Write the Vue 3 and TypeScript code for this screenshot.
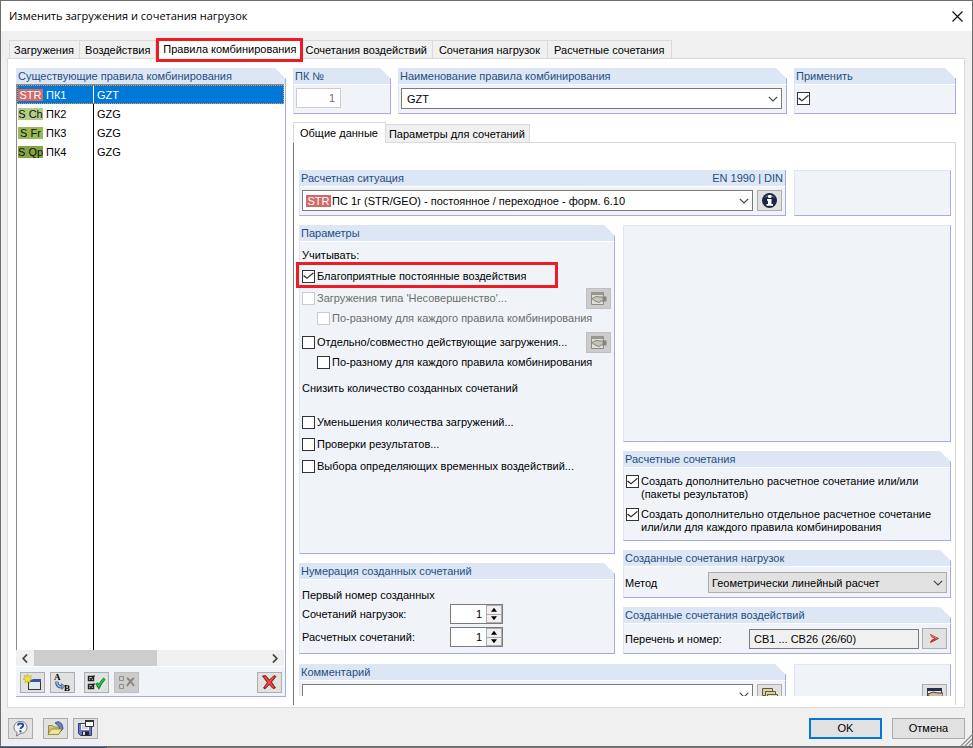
<script setup lang="ts">
import { ref } from 'vue'

interface Rule {
  code: string
  tone: string
  name: string
  description: string
}

const mainTabs = [
  'Загружения',
  'Воздействия',
  'Правила комбинирования',
  'Сочетания воздействий',
  'Сочетания нагрузок',
  'Расчетные сочетания',
]
const activeTab = ref(2)

const subTabs = ['Общие данные', 'Параметры для сочетаний']
const activeSubTab = ref(0)

const rules: Rule[] = [
  { code: 'STR', tone: 'str', name: 'ПК1', description: 'GZT' },
  { code: 'S Ch', tone: 'ch', name: 'ПК2', description: 'GZG' },
  { code: 'S Fr', tone: 'fr', name: 'ПК3', description: 'GZG' },
  { code: 'S Qp', tone: 'qp', name: 'ПК4', description: 'GZG' },
]
const selectedRule = ref(0)

const apply = ref(true)
const favourable = ref(true)
const separateLoads = ref(false)
const separatePerRule = ref(false)
const reduceCases = ref(false)
const checkResults = ref(false)
const selectLeading = ref(false)
const createEnvelope = ref(true)
const createPerRule = ref(true)
const firstLoad = ref(1)
const firstResult = ref(1)
</script>

<template>
  <div class="desktop">
    <div class="window">
      <header class="titlebar">
        <h1>Изменить загружения и сочетания нагрузок</h1>
        <button class="close" type="button" aria-label="Закрыть">
          <svg width="11" height="11" viewBox="0 0 11 11"><path d="M.5 .5L10.5 10.5M10.5 .5L.5 10.5" stroke="#111" stroke-width="1.2" /></svg>
        </button>
      </header>

      <nav class="tabs" role="tablist">
        <button
          v-for="(tab, i) in mainTabs"
          :key="tab"
          class="tab"
          :class="{ active: i === activeTab }"
          type="button"
          role="tab"
          :aria-selected="i === activeTab"
          @click="activeTab = i"
        >{{ tab }}</button>
      </nav>

      <main class="panel">
        <section class="group rules">
          <h2 class="head">Существующие правила комбинирования</h2>
          <div class="rules-body">
            <div class="list">
              <table>
                <tbody>
                  <tr
                    v-for="(rule, i) in rules"
                    :key="rule.name"
                    :class="{ selected: i === selectedRule }"
                    @click="selectedRule = i"
                  >
                    <td class="rule-name"><span class="badge" :class="rule.tone">{{ rule.code }}</span>{{ rule.name }}</td>
                    <td class="rule-text">{{ rule.description }}</td>
                  </tr>
                </tbody>
              </table>
            </div>
            <div class="scrollbar">
              <button type="button" aria-label="Влево"><svg width="6" height="9" viewBox="0 0 6 9"><path d="M5 .5L1.2 4.500L5 8.500" fill="none" stroke="#444" stroke-width="1.8" /></svg></button>
              <div class="track"><div class="thumb"></div></div>
              <button type="button" aria-label="Вправо"><svg width="6" height="9" viewBox="0 0 6 9"><path d="M1 .5L4.800 4.500L1 8.500" fill="none" stroke="#444" stroke-width="1.8" /></svg></button>
            </div>
            <div class="toolbar">
              <button class="tool" type="button" aria-label="Создать">
                <svg width="19" height="17" viewBox="0 0 19 17">
                  <rect x="5.500" y="5.500" width="12" height="10" fill="#e3e7f0" stroke="#333" />
                  <rect x="6" y="5" width="12" height="3" fill="#2f55a8" />
                  <path d="M4.500 0l1.200 2.700L8.500 1.500 7.300 4.200 9.500 5.500 7 6.300 7 9 4.800 7.300 2.200 9 2.500 6 0 5 2.300 3.800 1.300 1.300 3.800 2.500z" fill="#f2e23a" stroke="#b3a422" stroke-width=".6" />
                </svg>
              </button>
              <button class="tool" type="button" aria-label="Перенумеровать">
                <svg width="19" height="19" viewBox="0 0 19 19">
                  <text x="1" y="7" class="glyph">A</text>
                  <text x="11" y="18" class="glyph">B</text>
                  <path d="M4 8.500c-.5 4 2 6 6 5" fill="none" stroke="#3f5f90" stroke-width="3.400" />
                  <path d="M4 8.500c-.5 4 2 6 6 5" fill="none" stroke="#9bb8e0" stroke-width="1.600" />
                  <path d="M8 10.500l4 2.500-3 3.500z" fill="#7f9fcf" stroke="#3f5f90" stroke-width=".6" />
                </svg>
              </button>
              <button class="tool spaced" type="button" aria-label="Выбрать все">
                <svg width="19" height="17" viewBox="0 0 19 17">
                  <path d="M1.500 2.500h5v4h-5zM1.500 10.500h5v4h-5z" fill="#fff" stroke="#222" stroke-width="1.400" />
                  <path d="M2.500 4l1.500 1.500L7.500 1.500M2.500 12l1.500 1.500L7.500 9.500" fill="none" stroke="#222" stroke-width="1.300" />
                  <path d="M9.500 9l2.300 3.800C13.500 9.500 15 7 17.500 4.500" fill="none" stroke="#0a7a1c" stroke-width="3" />
                  <path d="M9.800 9.300l2 3C13.500 9.500 15 7 17.500 4.500" fill="none" stroke="#25c840" stroke-width="1.500" />
                </svg>
              </button>
              <button class="tool off" type="button" aria-label="Снять выбор" disabled>
                <svg width="19" height="17" viewBox="0 0 19 17">
                  <path d="M2.500 2.500h4v4h-4zM2.500 10.500h4v4h-4z" fill="#ccc" stroke="#909088" />
                  <path d="M10 4c3 2 5 5 7 8M17 4c-3 2-5 5-7 8" fill="none" stroke="#85857c" stroke-width="1.800" />
                </svg>
              </button>
              <button class="tool last" type="button" aria-label="Удалить">
                <svg width="17" height="17" viewBox="0 0 17 17">
                  <path d="M1.500 2L4.500 1.500 8.500 6 13 1.500 15 2.500 10.500 8 14.500 14 12 14.500 8.300 10.500 4 15 2.500 14 6.300 8.500z" fill="#dc2f2f" stroke="#6d1515" stroke-width=".8" />
                  <path d="M4 3l8 10M12.500 3L4.500 13" stroke="#f26a6a" stroke-width=".7" />
                </svg>
              </button>
            </div>
          </div>
        </section>

        <div class="details">
          <div class="top-row">
            <section class="group">
              <label class="head" for="rule-no">ПК №</label>
              <div class="body field-body"><input id="rule-no" class="rule-no" type="text" value="1" disabled></div>
            </section>
            <section class="group">
              <label class="head" for="rule-title">Наименование правила комбинирования</label>
              <div class="body field-body">
                <div class="combo">
                  <select id="rule-title"><option>GZT</option></select>
                  <svg class="chevron" width="10" height="6" viewBox="0 0 10 6"><path d="M.8 .8L5 5 9.200 .8" fill="none" stroke="#444" stroke-width="1.200" /></svg>
                </div>
              </div>
            </section>
            <section class="group">
              <label class="head" for="apply">Применить</label>
              <div class="body apply-body"><input id="apply" v-model="apply" type="checkbox"></div>
            </section>
          </div>

          <nav class="subtabs" role="tablist">
            <button
              v-for="(tab, i) in subTabs"
              :key="tab"
              class="subtab"
              :class="{ active: i === activeSubTab }"
              type="button"
              role="tab"
              :aria-selected="i === activeSubTab"
              @click="activeSubTab = i"
            >{{ tab }}</button>
          </nav>

          <div class="subpanel">
            <div class="sheet">
              <div class="wide-row">
                <section class="group">
                  <div class="head square"><label for="situation">Расчетная ситуация</label><span>EN 1990 | DIN</span></div>
                  <div class="body situation-body">
                    <div class="combo">
                      <span class="badge str inline">STR</span>
                      <select id="situation" class="with-badge"><option>ПС 1г (STR/GEO) - постоянное / переходное - форм. 6.10</option></select>
                      <svg class="chevron" width="10" height="6" viewBox="0 0 10 6"><path d="M.8 .8L5 5 9.200 .8" fill="none" stroke="#444" stroke-width="1.200" /></svg>
                    </div>
                    <button class="tool" type="button" aria-label="Информация">
                      <svg width="17" height="17" viewBox="0 0 17 17">
                        <circle cx="8.500" cy="8.500" r="7.500" fill="#1b2647" />
                        <path d="M3 6a6 5 0 0 1 11 0c-3-2-8-2-11 0z" fill="#60709c" />
                        <rect x="7" y="3" width="3.500" height="3" rx="1" fill="#fff" />
                        <path d="M6 7h4.500v5H12v1.800H5.500V12H7V8.700H6z" fill="#fff" />
                      </svg>
                    </button>
                  </div>
                </section>
                <div class="group blank"></div>
              </div>

              <div class="columns">
                <div class="column">
                  <section class="group params">
                    <h2 class="head">Параметры</h2>
                    <div class="body params-body">
                      <p class="line">Учитывать:</p>
                      <label class="line marked"><input v-model="favourable" type="checkbox">Благоприятные постоянные воздействия</label>
                      <div class="line gap-s">
                        <label class="muted"><input type="checkbox" disabled>Загружения типа 'Несовершенство'...</label>
                        <button class="tool off" type="button" aria-label="Настройки несовершенств" disabled>
                          <svg width="17" height="15" viewBox="0 0 17 15">
                            <path d="M1.500 1.500h12v12h-12z" fill="#deded6" stroke="#8c8c84" />
                            <path d="M1 1h13v3H1z" fill="#96968e" />
                            <path d="M2 7.500l4-2 4 .5h3v4h-2l-2 1.500-4-1.500z" fill="#c4c4ba" stroke="#85857c" />
                            <path d="M13 5.500h3.500v5H13z" fill="#85857c" />
                          </svg>
                        </button>
                      </div>
                      <label class="line nested muted"><input type="checkbox" disabled>По-разному для каждого правила комбинирования</label>
                      <div class="line gap-m">
                        <label><input v-model="separateLoads" type="checkbox">Отдельно/совместно действующие загружения...</label>
                        <button class="tool off" type="button" aria-label="Настройки загружений" disabled>
                          <svg width="17" height="15" viewBox="0 0 17 15">
                            <path d="M1.500 1.500h12v12h-12z" fill="#deded6" stroke="#8c8c84" />
                            <path d="M1 1h13v3H1z" fill="#96968e" />
                            <path d="M2 7.500l4-2 4 .5h3v4h-2l-2 1.500-4-1.500z" fill="#c4c4ba" stroke="#85857c" />
                            <path d="M13 5.500h3.500v5H13z" fill="#85857c" />
                          </svg>
                        </button>
                      </div>
                      <label class="line nested"><input v-model="separatePerRule" type="checkbox">По-разному для каждого правила комбинирования</label>
                      <p class="line gap-l">Снизить количество созданных сочетаний</p>
                      <label class="line gap-xl"><input v-model="reduceCases" type="checkbox">Уменьшения количества загружений...</label>
                      <label class="line gap-s"><input v-model="checkResults" type="checkbox">Проверки результатов...</label>
                      <label class="line gap-s"><input v-model="selectLeading" type="checkbox">Выбора определяющих временных воздействий...</label>
                    </div>
                  </section>

                  <section class="group numbering">
                    <h2 class="head">Нумерация созданных сочетаний</h2>
                    <div class="body numbering-body">
                      <p>Первый номер созданных</p>
                      <div class="number-row">
                        <label for="first-load">Сочетаний нагрузок:</label>
                        <div class="spinner">
                          <input id="first-load" v-model.number="firstLoad" type="text">
                          <div class="arrows">
                            <button type="button" aria-label="Больше" @click="firstLoad++"><i class="up"></i></button>
                            <button type="button" aria-label="Меньше" @click="firstLoad--"><i class="down"></i></button>
                          </div>
                        </div>
                      </div>
                      <div class="number-row">
                        <label for="first-result">Расчетных сочетаний:</label>
                        <div class="spinner">
                          <input id="first-result" v-model.number="firstResult" type="text">
                          <div class="arrows">
                            <button type="button" aria-label="Больше" @click="firstResult++"><i class="up"></i></button>
                            <button type="button" aria-label="Меньше" @click="firstResult--"><i class="down"></i></button>
                          </div>
                        </div>
                      </div>
                    </div>
                  </section>
                </div>

                <div class="column">
                  <div class="group blank fill"></div>
                  <section class="group">
                    <h2 class="head">Расчетные сочетания</h2>
                    <div class="body results-body">
                      <label><input v-model="createEnvelope" type="checkbox"><span>Создать дополнительно расчетное сочетание или/или<br>(пакеты результатов)</span></label>
                      <label><input v-model="createPerRule" type="checkbox"><span>Создать дополнительно отдельное расчетное сочетание<br>или/или для каждого правила комбинирования</span></label>
                    </div>
                  </section>
                  <section class="group">
                    <h2 class="head">Созданные сочетания нагрузок</h2>
                    <div class="body pair-body method-body">
                      <label class="method-label" for="method">Метод</label>
                      <div class="combo grey">
                        <select id="method"><option>Геометрически линейный расчет</option></select>
                        <svg class="chevron" width="10" height="6" viewBox="0 0 10 6"><path d="M.8 .8L5 5 9.200 .8" fill="none" stroke="#444" stroke-width="1.200" /></svg>
                      </div>
                    </div>
                  </section>
                  <section class="group">
                    <h2 class="head">Созданные сочетания воздействий</h2>
                    <div class="body pair-body">
                      <label class="range-label" for="range">Перечень и номер:</label>
                      <input id="range" class="range" type="text" value="СВ1 ... СВ26 (26/60)" readonly>
                      <button class="tool" type="button" aria-label="Перейти">
                        <svg width="11" height="11" viewBox="0 0 11 11">
                          <path d="M1.500 1.500L9.500 5.500 1.500 9.500 2.500 7.300 6 5.500 2.500 3.700z" fill="#e03a3a" stroke="#a02525" stroke-width=".8" />
                          <path d="M2 2.500L8 5.500" stroke="#f7a0a0" stroke-width=".8" />
                        </svg>
                      </button>
                    </div>
                  </section>
                </div>
              </div>

              <div class="wide-row">
                <section class="group">
                  <label class="head" for="comment">Комментарий</label>
                  <div class="body situation-body">
                    <div class="combo">
                      <select id="comment"><option></option></select>
                      <svg class="chevron" width="10" height="6" viewBox="0 0 10 6"><path d="M.8 .8L5 5 9.200 .8" fill="none" stroke="#444" stroke-width="1.200" /></svg>
                    </div>
                    <button class="tool" type="button" aria-label="Библиотека комментариев">
                      <svg width="17" height="17" viewBox="0 0 17 17">
                        <path d="M1.500 2.500h10v7h-10z" fill="#d8d2a4" stroke="#5f5a3a" />
                        <path d="M4.500 5.500h10v7h-10z" fill="#d8d2a4" stroke="#5f5a3a" />
                        <path d="M6.500 8.500h10v7h-10z" fill="#e6e0b4" stroke="#5f5a3a" />
                      </svg>
                    </button>
                  </div>
                </section>
                <div class="group blank comment-tools">
                  <button class="tool" type="button" aria-label="Параметры">
                    <svg width="17" height="17" viewBox="0 0 17 17">
                      <path d="M1.500 2.500h14v12h-14z" fill="#e8e8e8" stroke="#444" />
                      <path d="M1 2h15v3H1z" fill="#22304e" />
                      <path d="M2 8l5-2 5 1h5v4h-4l-3 3-3-3-5-1z" fill="#d8b899" stroke="#4a3a30" />
                    </svg>
                  </button>
                </div>
              </div>
            </div>
          </div>
        </div>
      </main>

      <footer class="footer">
        <button class="tool" type="button" aria-label="Справка">
          <svg width="19" height="17" viewBox="0 0 19 17">
            <path d="M9.500 1.500c4 0 6.500 2.600 6.500 5.900s-2.500 5.800-6 5.800L5.500 16l.6-3.600C4 11.500 3 9.600 3 7.400 3 4 5.500 1.500 9.500 1.500z" fill="#f4f6fb" stroke="#777" />
            <path d="M7 5.500c0-2.600 5.200-2.600 5.200 0C12.200 7.300 9.600 7 9.500 9M9.400 10.300v2" fill="none" stroke="#27479a" stroke-width="2" />
          </svg>
        </button>
        <button class="tool open" type="button" aria-label="Открыть">
          <svg width="19" height="17" viewBox="0 0 19 17">
            <path d="M9 3c4-3 8 0 8 6l-3 3c0-5-2-7-5-9z" fill="#5d86bd" stroke="#2f4b73" stroke-width=".8" />
            <path d="M2.500 5.500h4l1.500 1.500h5v7h-10.500z" fill="#d9c76a" stroke="#8a7a30" stroke-width=".8" />
            <path d="M5 9h11l-3.500 5.500H2z" fill="#efe39a" stroke="#8a7a30" stroke-width=".8" />
          </svg>
        </button>
        <button class="tool" type="button" aria-label="Сохранить">
          <svg width="19" height="17" viewBox="0 0 19 17">
            <path d="M2.500 3.500h13v12h-11l-2-2z" fill="#6d74c8" stroke="#343a80" />
            <path d="M5 4h8v6H5z" fill="#fff" />
            <path d="M6 6h4M6 8h6" stroke="#999" stroke-width=".8" />
            <path d="M6 11.500h7v4H6z" fill="#222" />
            <path d="M7 12h2v3H7z" fill="#ddd" />
            <path d="M9.500 .500h8v6h-8z" fill="#fff" stroke="#333" />
            <path d="M9 0h9v2H9z" fill="#333" />
          </svg>
        </button>
        <button class="action primary" type="button">OK</button>
        <button class="action" type="button">Отмена</button>
        <svg class="grip" width="12" height="12" viewBox="0 0 12 12"><path d="M1 12L12 1M5 12L12 5M9 12L12 9" stroke="#8a8a8a" stroke-width="1.200" /></svg>
      </footer>
    </div>
  </div>
</template>

<style>
body {
  margin: 0;
}
</style>

<style scoped>
* {
  box-sizing: border-box;
}

.desktop {
  height: 100vh;
  padding-bottom: 1px;
  background: linear-gradient(90deg, #2c4f7c 11%, #747474 11%);
  font-family: 'Liberation Sans', Arial, sans-serif;
  font-size: 11px;
  line-height: 14px;
  color: #000;
}

.window {
  display: flex;
  flex-direction: column;
  height: 100%;
  border: 1px solid #6f6d6e;
  background: #f0f0f0;
}

button,
input,
select {
  font: inherit;
  color: inherit;
  margin: 0;
}

button {
  padding: 0;
}

h1,
h2,
p {
  margin: 0;
  font-size: inherit;
  font-weight: normal;
}

svg {
  display: block;
}

.titlebar {
  display: flex;
  align-items: center;
  justify-content: space-between;
  height: 30px;
  flex: none;
  padding: 0 9px 0 8px;
  background: #fff;
}

.titlebar h1 {
  font-family: 'Open Sans', 'Segoe UI', sans-serif;
}

.close {
  border: 0;
  background: none;
}

/* main tabs */
.tabs {
  display: flex;
  align-items: flex-end;
  flex: none;
  height: 27px;
  padding-left: 8px;
}

.tab,
.subtab {
  height: 18px;
  padding: 0 5px;
  border: 1px solid #d9d9d9;
  border-bottom: 0;
  border-left-width: 0;
  background: #f0f0f0;
  white-space: nowrap;
}

.tab:first-child {
  padding-left: 4px;
  border-left-width: 1px;
}

.tab.active {
  position: relative;
  z-index: 1;
  height: 24px;
  margin-bottom: -4px;
  padding: 0 4px 3px;
  border: 3px solid #ed1c24;
  background: #fff;
}

.tab.active ~ .tab {
  padding: 0 7px 0 6px;
}

.tab.active + .tab {
  padding: 0 5px 0 2px;
}

.panel {
  display: grid;
  grid-template-columns: minmax(0, 270fr) minmax(0, 663fr);
  gap: 7px;
  flex: 1;
  min-height: 0;
  margin: 0 7px 0 6px;
  padding: 9px 8px 2px;
  border: 1px solid #d9d9d9;
  background: #fff;
}

/* titled groups */
.group {
  display: flex;
  flex-direction: column;
  min-width: 0;
}

.head {
  display: block;
  flex: none;
  height: 16px;
  padding: 0 2px;
  overflow: hidden;
  border-right: 1px solid #a9a9ea;
  background: #dce6f4;
  clip-path: polygon(0 0, calc(100% - 11px) 0, 100% 11px, 100% 100%, 0 100%);
  color: #1f4e82;
  line-height: 16px;
  white-space: nowrap;
}

.head.square {
  display: flex;
  justify-content: space-between;
  clip-path: none;
}

.body,
.blank {
  border: 1px solid #a9a9ea;
  border-left-color: #dce6f4;
  background: #f0f4f9;
}

.body {
  flex: 1;
  border-top-color: #fff;
}

.blank {
  border-top-color: #dce6f4;
}

/* list of rules */
.rules {
  margin-bottom: 8px;
}

.rules-body {
  display: flex;
  flex-direction: column;
  flex: 1;
  min-height: 0;
  border: solid #a9a9ea;
  border-width: 0 1px 1px 0;
}

.list {
  flex: 1;
  min-height: 0;
  margin-right: 1px;
  border: solid #8c8c8c;
  border-width: 1px 0 0 1px;
  background: linear-gradient(#000, #000) 76px 0 / 1px 100% no-repeat #fff;
}

table {
  width: 100%;
  border-spacing: 0;
}

tr {
  height: 19px;
}

td {
  padding: 0;
}

.rule-name {
  width: 77px;
  padding-left: 1px;
}

.rule-text {
  padding-left: 3px;
}

.selected {
  outline: 1px dotted #e8944a;
  outline-offset: -1px;
  background: #0078d7;
  color: #fff;
}

.selected .rule-name {
  border-right: 1px solid #fff;
}

.badge {
  display: inline-block;
  width: 25px;
  height: 12px;
  margin-right: 3px;
  color: #111;
  font-size: 11px;
  line-height: 12px;
  text-align: center;
  white-space: nowrap;
}

.badge.str {
  background: #d26a6a;
  color: #fff;
}

.badge.ch {
  background: #b3cd87;
}

.badge.fr {
  background: #99b957;
}

.badge.qp {
  background: #83a543;
}

.scrollbar {
  display: flex;
  flex: none;
  height: 16px;
  margin: 0 1px 1px 0;
  background: #f0f0f0;
}

.scrollbar button {
  display: grid;
  place-items: center;
  width: 18px;
  border: 0;
  background: none;
}

.track {
  flex: 1;
}

.thumb {
  width: 53%;
  height: 100%;
  background: #cdcdcd;
}

.toolbar {
  display: flex;
  gap: 5px;
  flex: none;
  height: 29px;
  padding: 5px 3px 0 4px;
  background: #f0f4f9;
}

.tool {
  display: grid;
  place-items: center;
  flex: none;
  width: 25px;
  height: 21px;
  border: 1px solid #adadad;
  background: #e1e1e1;
}

.tool.off {
  border-color: #bfbfbf;
  background: #cccccc;
}

.tool.spaced {
  margin-left: 4px;
}

.tool.last {
  margin-left: auto;
}

.glyph {
  font-family: 'Liberation Serif', serif;
  font-size: 9px;
  font-weight: bold;
}

/* right side */
.details {
  display: flex;
  flex-direction: column;
  min-height: 0;
  min-width: 0;
}

.top-row {
  display: grid;
  grid-template-columns: minmax(0, 98fr) minmax(0, 389fr) minmax(0, 162fr);
  gap: 7px;
  margin-bottom: 8px;
}

.field-body {
  padding: 3px 4px 4px 2px;
}

.rule-no {
  display: block;
  width: 45px;
  height: 20px;
  padding: 0 5px;
  border: 1px solid #ccc;
  background: #fff;
  color: #6d6d6d;
  text-align: right;
}

.apply-body {
  padding: 7px 2px;
}

.combo {
  position: relative;
  flex: 1;
  min-width: 0;
}

select {
  display: block;
  width: 100%;
  height: 21px;
  padding: 0 22px 0 5px;
  appearance: none;
  border: 1px solid #7a7a7a;
  border-radius: 0;
  background: #fff;
}

.with-badge {
  padding-left: 29px;
}

.grey select {
  padding-left: 3px;
  border-color: #adadad;
  background: #e1e1e1;
}

.chevron {
  position: absolute;
  top: 8px;
  right: 4px;
  pointer-events: none;
}

.badge.inline {
  position: absolute;
  top: 5px;
  left: 4px;
}

input[type='checkbox'] {
  display: grid;
  place-items: center;
  flex: none;
  width: 13px;
  height: 13px;
  appearance: none;
  border: 1px solid #333;
  background: #fff;
}

input[type='checkbox']:checked::before {
  content: '';
  width: 11px;
  height: 9px;
  background: #333;
  clip-path: polygon(0 50%, 10% 40%, 36% 66%, 90% 10%, 100% 20%, 36% 84%);
}

input[type='checkbox']:disabled {
  border-color: #ccc;
}

.subtabs {
  display: flex;
  align-items: flex-end;
  flex: none;
  height: 20px;
}

.subtab {
  padding: 0 4px 0 3px;
}

.subtab.active {
  height: 21px;
  margin-bottom: -1px;
  padding: 0 7px 1px 6px;
  border-left-width: 1px;
  background: #fff;
  z-index: 1;
}

.subpanel {
  display: flex;
  flex: 1;
  min-height: 0;
  padding: 27px 4px 9px 0;
  border: 1px solid #d9d9d9;
  border-left-color: #777;
  border-bottom: 0;
}

.sheet {
  display: flex;
  flex-direction: column;
  gap: 9px;
  flex: 1;
  min-width: 0;
  padding-left: 5px;
  overflow: hidden;
}

.wide-row {
  display: grid;
  grid-template-columns: minmax(0, 487fr) minmax(0, 157fr);
  gap: 8px;
  flex: none;
}

.situation-body {
  display: flex;
  gap: 4px;
  padding: 3px 3px 4px 2px;
}

.columns {
  display: grid;
  grid-template-columns: minmax(0, 316fr) minmax(0, 328fr);
  gap: 8px;
  flex: none;
  margin-bottom: 1px;
}

.column {
  display: flex;
  flex-direction: column;
  gap: 9px;
  min-width: 0;
}

.fill {
  flex: 1;
}

.params-body {
  padding: 3px 3px 77px 2px;
}

.line {
  display: flex;
  align-items: center;
  justify-content: space-between;
  height: 20px;
  white-space: nowrap;
}

label.line {
  justify-content: flex-start;
}

.line label {
  display: flex;
  align-items: center;
}

.line input {
  margin-right: 2px;
}

.line.nested {
  padding-left: 15px;
}

.gap-s {
  margin-top: 2px;
}

.gap-m {
  margin-top: 4px;
}

.gap-l {
  margin-top: 6px;
}

.gap-xl {
  margin-top: 14px;
}

.muted {
  color: #6d6d6d;
}

.marked {
  position: relative;
  margin-top: 1px;
}

.marked::after {
  content: '';
  position: absolute;
  box-sizing: border-box;
  top: -4px;
  left: -6px;
  width: 262px;
  height: 26px;
  border: 3px solid #ed1c24;
}

.numbering-body {
  padding: 8px 2px 6px;
}

.numbering-body p {
  margin-bottom: 2px;
}

.number-row {
  display: grid;
  grid-template-columns: 148px auto;
  align-items: center;
  justify-content: start;
}

.number-row + .number-row {
  margin-top: 3px;
}

.spinner {
  display: flex;
  width: 53px;
  height: 20px;
  border: 1px solid #7a7a7a;
  background: #fff;
}

.spinner input {
  flex: 1;
  min-width: 0;
  padding: 0 4px 0 0;
  border: 0;
  background: none;
  text-align: right;
}

.arrows {
  display: grid;
  gap: 1px;
  width: 16px;
  border: 1px solid #adadad;
  background: #adadad;
}

.arrows button {
  display: grid;
  place-items: center;
  border: 0;
  background: #f0f0f0;
}

.up,
.down {
  width: 6px;
  height: 4px;
  background: #000;
  clip-path: polygon(50% 0, 100% 100%, 0 100%);
}

.down {
  clip-path: polygon(0 0, 100% 0, 50% 100%);
}

.results-body {
  display: flex;
  flex-direction: column;
  gap: 7px;
  padding: 7px 2px 6px;
  line-height: 13px;
  white-space: nowrap;
}

.results-body label {
  display: flex;
  gap: 2px;
}

.pair-body {
  display: flex;
  align-items: center;
  gap: 3px;
  padding: 4px 3px 4px 1px;
}

.method-body {
  padding-top: 5px;
}

.method-label {
  width: 80px;
}

.range-label {
  width: 121px;
}

.range {
  flex: 1;
  min-width: 0;
  height: 20px;
  padding: 0 4px;
  border: 1px solid #7a7a7a;
  background: #f0f0f0;
}

.comment-tools {
  align-items: flex-end;
  padding: 19px 3px 0;
}

.footer {
  position: relative;
  display: flex;
  align-items: center;
  gap: 5px;
  flex: none;
  height: 38px;
  padding: 2px 7px 0;
}

.open {
  margin-left: 5px;
}

.action {
  width: 73px;
  height: 21px;
  border: 1px solid #adadad;
  background: #e1e1e1;
}

.action:last-of-type {
  margin-left: 5px;
}

.primary {
  margin-left: auto;
  border: 2px solid #0078d7;
}

.grip {
  position: absolute;
  right: 0;
  bottom: 0;
}
</style>
